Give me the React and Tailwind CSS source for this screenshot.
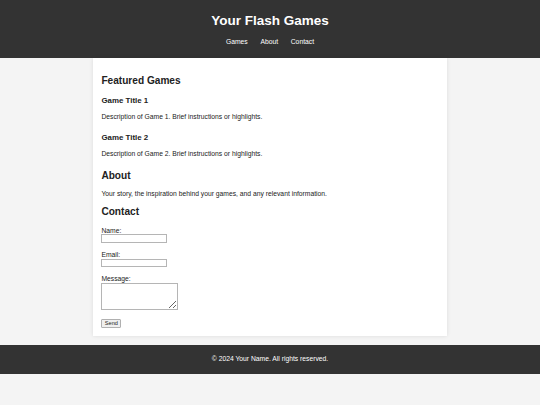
import React from "react";

const games = [
  { title: "Game Title 1", desc: "Description of Game 1. Brief instructions or highlights." },
  { title: "Game Title 2", desc: "Description of Game 2. Brief instructions or highlights." },
];

export default function App() {
  return (
    <div className="min-h-[405px] bg-[#f4f4f4] text-[#222] font-['Liberation_Sans',Arial,sans-serif]">
      {/* header */}
      <header className="h-[58px] bg-[#333] pt-[12.6px] text-center text-white">
        <h1 className="mb-[10px] text-[13.5px] font-bold leading-[normal]">Your Flash Games</h1>
        <nav className="flex justify-center gap-[12.7px] text-[6.75px] leading-[7.8px]">
          <a href="#games">Games</a>
          <a href="#about">About</a>
          <a href="#contact">Contact</a>
        </nav>
      </header>

      {/* main card */}
      <main className="mx-auto w-[354px] bg-white p-[8.4px] shadow-[0_0_4px_rgba(0,0,0,0.1)]">
        <section id="games" className="mb-[12.7px]">
          <h2 className="mt-[8.4px] mb-[10.4px] text-[10.125px] font-bold leading-[normal]">Featured Games</h2>
          {games.map((g) => (
            <div key={g.title} className="mb-[11.9px]">
              <h3 className="my-[7.9px] text-[7.9px] font-bold leading-[normal]">{g.title}</h3>
              <p className="my-[6.75px] text-[6.75px] leading-[7.8px]">{g.desc}</p>
            </div>
          ))}
        </section>

        <section id="about">
          <h2 className="my-[8.4px] text-[10.125px] font-bold leading-[normal]">About</h2>
          <p className="my-[6.75px] text-[6.75px] leading-[7.8px]">
            Your story, the inspiration behind your games, and any relevant information.
          </p>
        </section>

        <section id="contact">
          <h2 className="mt-[8.4px] mb-[9.9px] text-[10.125px] font-bold leading-[normal]">Contact</h2>
          <form className="text-[6.75px] leading-[7.8px]" onSubmit={(e) => e.preventDefault()}>
            <label className="block">Name:</label>
            <input type="text" className="block h-[8.6px] w-[66px] border border-[#b5b5b5] bg-white" />
            <label className="mt-[8px] block">Email:</label>
            <input type="email" className="block h-[8.6px] w-[66px] border border-[#b5b5b5] bg-white" />
            <label className="mt-[8px] block">Message:</label>
            <textarea className="block h-[27px] w-[77px] resize border border-[#b5b5b5] bg-white" />
            <button
              type="submit"
              className="mt-[9px] block h-[8.6px] w-[20px] rounded-[1px] border border-[#b0b0b0] bg-[#efefef] text-[5.6px] leading-[6px] text-[#222]"
            >
              Send
            </button>
          </form>
        </section>
      </main>

      {/* footer */}
      <footer className="mt-[8.4px] h-[29.7px] bg-[#333] flex items-center justify-center text-[6.75px] text-white">
        <p>© 2024 Your Name. All rights reserved.</p>
      </footer>
    </div>
  );
}
